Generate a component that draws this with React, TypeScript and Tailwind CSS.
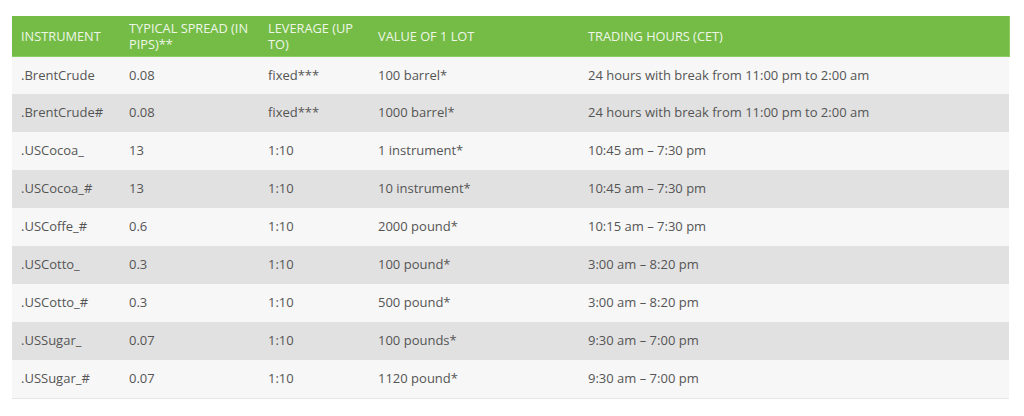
import React from 'react';

interface Row {
  instrument: string;
  spread: string;
  leverage: string;
  lot: string;
  hours: string;
}

const rows: Row[] = [
  { instrument: '.BrentCrude', spread: '0.08', leverage: 'fixed***', lot: '100 barrel*', hours: '24 hours with break from 11:00 pm to 2:00 am' },
  { instrument: '.BrentCrude#', spread: '0.08', leverage: 'fixed***', lot: '1000 barrel*', hours: '24 hours with break from 11:00 pm to 2:00 am' },
  { instrument: '.USCocoa_', spread: '13', leverage: '1:10', lot: '1 instrument*', hours: '10:45 am – 7:30 pm' },
  { instrument: '.USCocoa_#', spread: '13', leverage: '1:10', lot: '10 instrument*', hours: '10:45 am – 7:30 pm' },
  { instrument: '.USCoffe_#', spread: '0.6', leverage: '1:10', lot: '2000 pound*', hours: '10:15 am – 7:30 pm' },
  { instrument: '.USCotto_', spread: '0.3', leverage: '1:10', lot: '100 pound*', hours: '3:00 am – 8:20 pm' },
  { instrument: '.USCotto_#', spread: '0.3', leverage: '1:10', lot: '500 pound*', hours: '3:00 am – 8:20 pm' },
  { instrument: '.USSugar_', spread: '0.07', leverage: '1:10', lot: '100 pounds*', hours: '9:30 am – 7:00 pm' },
  { instrument: '.USSugar_#', spread: '0.07', leverage: '1:10', lot: '1120 pound*', hours: '9:30 am – 7:00 pm' },
];

const headers = ['Instrument', 'Typical spread (in pips)**', 'Leverage (up to)', 'Value of 1 lot', 'Trading hours (CET)'];
const widths = ['w-[108px]', 'w-[139px]', 'w-[110px]', 'w-[210px]', 'w-[430px]'];

const App: React.FC = () => {
  return (
    <div className="w-[1024px] h-[416px] bg-white pt-[16px] pl-[12px] font-['Open_Sans',sans-serif]">
      <table className="w-[997px] table-fixed border-collapse border-b border-[#e6e6e6]">
        <colgroup>
          {widths.map((w) => (
            <col key={w} className={w} />
          ))}
        </colgroup>
        <thead>
          <tr className="h-[40px] bg-[#74bc45] border-r border-b border-[#8ccd63]">
            {headers.map((h) => (
              <th
                key={h}
                className="pl-[9px] pr-[4px] py-[3px] text-left align-middle font-normal uppercase text-[12.8px] leading-[16px] text-[#eef6e8]">
                {h}
              </th>
            ))}
          </tr>
        </thead>
        <tbody>
          {rows.map((r, i) => (
            <tr key={r.instrument} className={`h-[38px] ${i % 2 === 0 ? 'bg-[#f7f7f7]' : 'bg-[#e1e1e1]'}`}>
              <td className="pl-[9px] text-[13px] text-[#555]">{r.instrument}</td>
              <td className="pl-[9px] text-[13px] text-[#555]">{r.spread}</td>
              <td className="pl-[9px] text-[13px] text-[#555]">{r.leverage}</td>
              <td className="pl-[9px] text-[13px] text-[#555]">{r.lot}</td>
              <td className="pl-[9px] text-[13px] text-[#555]">{r.hours}</td>
            </tr>
          ))}
        </tbody>
      </table>
    </div>
  );
};

export default App;
